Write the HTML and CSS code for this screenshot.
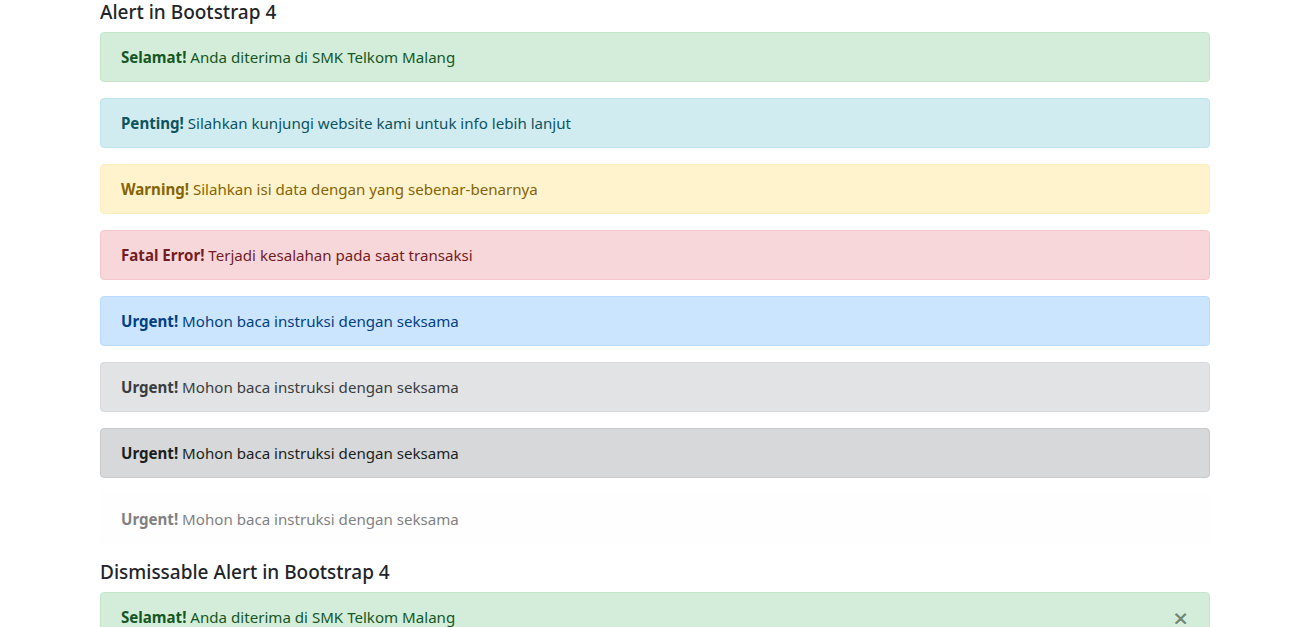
FILE: index.html
```html
<!DOCTYPE html>
<html lang="id">
<head>
<meta charset="utf-8">
<title>Alert in Bootstrap 4</title>
<link rel="stylesheet" href="styles.css">
</head>
<body>
<div class="container">
  <h5 class="title">Alert in Bootstrap 4</h5>
  <div class="alert alert-success"><strong>Selamat!</strong> Anda diterima di SMK Telkom Malang</div>
  <div class="alert alert-info"><strong>Penting!</strong> Silahkan kunjungi website kami untuk info lebih lanjut</div>
  <div class="alert alert-warning"><strong>Warning!</strong> Silahkan isi data dengan yang sebenar-benarnya</div>
  <div class="alert alert-danger"><strong>Fatal Error!</strong> Terjadi kesalahan pada saat transaksi</div>
  <div class="alert alert-primary"><strong>Urgent!</strong> Mohon baca instruksi dengan seksama</div>
  <div class="alert alert-secondary"><strong>Urgent!</strong> Mohon baca instruksi dengan seksama</div>
  <div class="alert alert-dark"><strong>Urgent!</strong> Mohon baca instruksi dengan seksama</div>
  <div class="alert alert-light"><strong>Urgent!</strong> Mohon baca instruksi dengan seksama</div>

  <h5 class="title">Dismissable Alert in Bootstrap 4</h5>
  <div class="alert alert-success alert-dismissible">
    <button type="button" class="close">&times;</button>
    <strong>Selamat!</strong> Anda diterima di SMK Telkom Malang
  </div>
</div>
</body>
</html>
```

FILE: styles.css
```css
* { box-sizing: border-box; }
html, body { margin: 0; padding: 0; background: #fff; }
body {
  font-family: "Noto Sans", "Open Sans", sans-serif;
  font-size: 15.1px;
  line-height: 24px;
  color: #212529;
}
.container {
  width: 1110px;
  margin-left: 100px;
}
.title {
  margin: 0 0 8px;
  padding-top: 1px;
  font-size: 19px;
  font-weight: 500;
  line-height: 23px;
  color: #212529;
}
.alert {
  position: relative;
  padding: 12px 20px;
  margin-bottom: 16px;
  border: 1px solid transparent;
  border-radius: 4px;
}
.alert strong { font-weight: 700; }
.alert-success { color: #155724; background: #d4edda; border-color: #c3e6cb; }
.alert-info { color: #0c5460; background: #d1ecf1; border-color: #bee5eb; }
.alert-warning { color: #856404; background: #fff3cd; border-color: #ffeeba; }
.alert-danger { color: #721c24; background: #f8d7da; border-color: #f5c6cb; }
.alert-primary { color: #004085; background: #cce5ff; border-color: #b8daff; }
.alert-secondary { color: #383d41; background: #e2e3e5; border-color: #d6d8db; }
.alert-dark { color: #1b1e21; background: #d6d8d9; border-color: #c6c8ca; }
.alert-light { color: #818182; background: #fefefe; border-color: #fdfdfe; }
.alert-dismissible { padding-right: 64px; }
.close {
  position: absolute;
  top: 0;
  right: 0;
  padding: 15px 20px 0 20px;
  background: transparent;
  border: 0;
  font-family: "DejaVu Sans", sans-serif;
  font-size: 20px;
  font-weight: 700;
  line-height: 1;
  color: #2f4a34;
  text-shadow: 0 1px 0 #fff;
  opacity: .6;
  cursor: pointer;
}
```
